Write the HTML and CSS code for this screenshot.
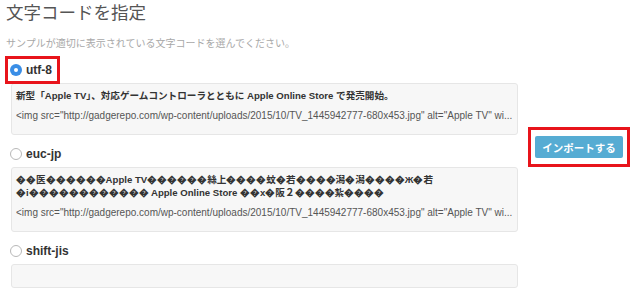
FILE: index.html
```html
<!DOCTYPE html>
<html lang="ja">
<head>
    <meta charset="UTF-8">
    <title>文字コードを指定</title>
    <link rel="stylesheet" href="styles.css">
</head>
<body>
    <div class="container">
        <h1 class="title">文字コードを指定</h1>
        <p class="lead">サンプルが適切に表示されている文字コードを選んでください。</p>

        <div class="options">
            <div class="choices">
                <label class="choice marked">
                    <span class="radio checked"></span>
                    <span class="choice-name">utf-8</span>
                </label>
                <div class="sample">
                    <p class="sample-title">新型「Apple TV」、対応ゲームコントローラとともに Apple Online Store で発売開始。</p>
                    <p class="sample-body">&lt;img src="http://gadgerepo.com/wp-content/uploads/2015/10/TV_1445942777-680x453.jpg" alt="Apple TV" wi...</p>
                </div>

                <label class="choice">
                    <span class="radio"></span>
                    <span class="choice-name">euc-jp</span>
                </label>
                <div class="sample">
                    <p class="sample-title">��医������Apple TV������絲上����蚊�若����潟�潟����Ж�若<br>�i������������ Apple Online Store ��x�阪２����紮����</p>
                    <p class="sample-body">&lt;img src="http://gadgerepo.com/wp-content/uploads/2015/10/TV_1445942777-680x453.jpg" alt="Apple TV" wi...</p>
                </div>

                <label class="choice">
                    <span class="radio"></span>
                    <span class="choice-name">shift-jis</span>
                </label>
                <div class="sample empty"></div>
            </div>

            <div class="actions">
                <div class="marked-box">
                    <button class="btn">インポートする</button>
                </div>
            </div>
        </div>
    </div>
</body>
</html>
```

FILE: styles.css
```css
* {
    margin: 0;
    padding: 0;
    box-sizing: border-box;
}

body {
    font-family: 'Liberation Sans', 'Noto Sans CJK JP', sans-serif;
    background: #fff;
    color: #333;
}

.container {
    padding-left: 6px;
}

.title {
    margin-top: 1px;
    font-size: 17.5px;
    line-height: 24px;
    font-weight: normal;
    color: #555;
}

.lead {
    margin-top: 12px;
    font-size: 10px;
    line-height: 14px;
    color: #a8a8a8;
}

.options {
    display: flex;
    align-items: flex-start;
    margin-top: 10px;
}

.choices {
    width: 512px;
    padding-left: 4px;
}

.choice {
    display: flex;
    align-items: center;
    gap: 4px;
    width: max-content;
    height: 18px;
    margin-bottom: 4px;
}

.sample + .choice {
    margin-top: 10px;
}

/* annotation frames */
.marked {
    outline: 3px solid #e8141b;
    outline-offset: 2px;
    padding-right: 3px;
}

.radio {
    width: 12px;
    height: 12px;
    border-radius: 50%;
    border: 1px solid #b8b8b8;
    background: #fff;
    flex-shrink: 0;
}

.radio.checked {
    border: none;
    background: #3a8ee6;
    display: flex;
    align-items: center;
    justify-content: center;
}

.radio.checked::after {
    content: '';
    width: 4px;
    height: 4px;
    border-radius: 50%;
    background: #fff;
}

.choice-name {
    font-size: 12px;
    font-weight: bold;
    color: #333;
}

.sample {
    margin-left: 1px;
    width: 507px;
    background: #f7f7f7;
    border: 1px solid #e6e6e6;
    border-radius: 3px;
    padding: 5px 5px 12px 4px;
}

.sample-title {
    font-size: 9.6px;
    line-height: 13px;
    font-weight: bold;
    color: #333;
    margin-bottom: 7px;
}

.sample-body {
    font-size: 10px;
    line-height: 13px;
    color: #555;
    white-space: nowrap;
    overflow: hidden;
}

.sample.empty {
    height: 24px;
    padding: 0;
}

.actions {
    margin-left: 10px;
    margin-top: 66px;
}

.marked-box {
    border: 3px solid #e8141b;
    padding: 6px 4px;
}

.btn {
    display: block;
    width: 88px;
    height: 22px;
    border: none;
    border-radius: 2px;
    background: #56acd3;
    color: #fff;
    font-family: 'Liberation Sans', 'Noto Sans CJK JP', sans-serif;
    font-size: 10.5px;
    font-weight: bold;
}
```
